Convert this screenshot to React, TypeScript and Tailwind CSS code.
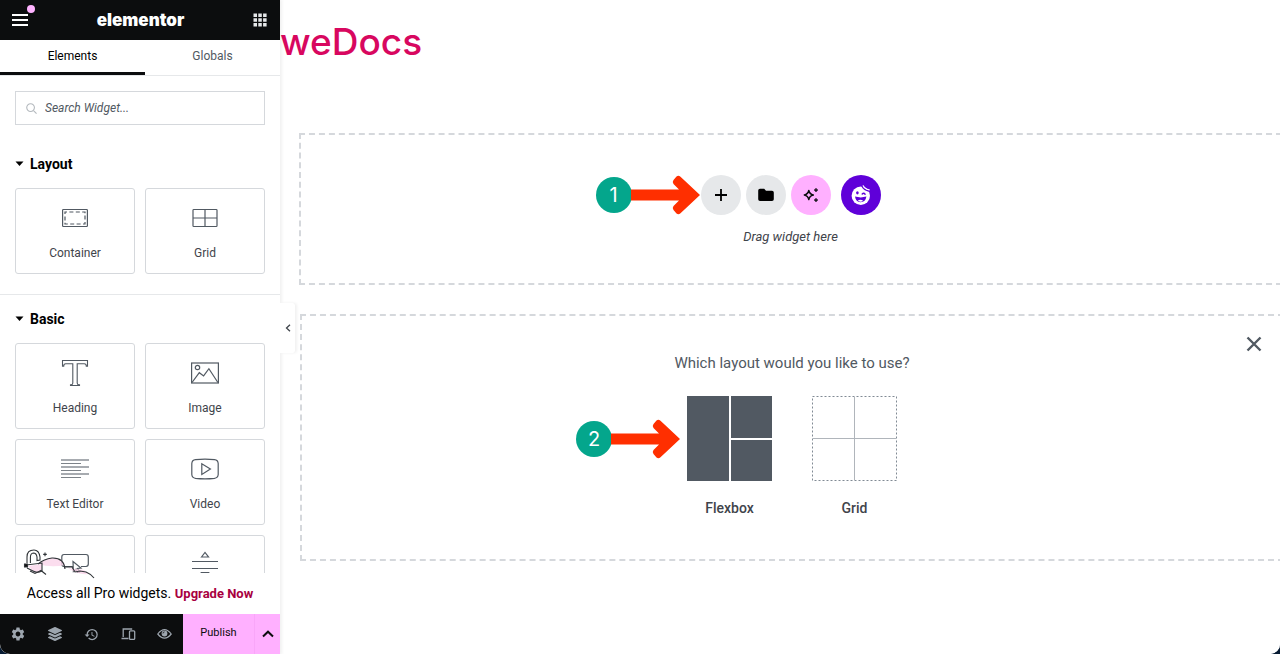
import React, { useState } from "react";
import { FaLayerGroup } from "react-icons/fa";
import { MdHistory, MdSettings } from "react-icons/md";

type IconProps = { className?: string };
type Widget = { name: string; icon: React.ReactNode; iconOnly?: boolean };

const line = { fill: "none", stroke: "currentColor", strokeWidth: 1.2 } as const;

function ContainerIcon() {
  return (
    <svg width="28" height="28" viewBox="0 0 28 28" {...line}>
      <rect x="1.6" y="5.5" width="24.8" height="17" rx="0.8" />
      <rect x="4" y="8" width="20" height="12" strokeDasharray="4 2.4" strokeDashoffset="2" />
    </svg>
  );
}

function GridIcon() {
  return (
    <svg width="28" height="28" viewBox="0 0 28 28" {...line}>
      <rect x="2" y="5.5" width="24" height="17" rx="0.8" />
      <path d="M14 5.5v17M2 14h24" />
    </svg>
  );
}

function HeadingIcon() {
  return (
    <svg width="28" height="28" viewBox="0 0 28 28" {...line} strokeWidth={1.1}>
      <path d="M1.5 1.5h25v5.6h-1.2c0-1.6-.6-2.4-2-2.4h-7.1v19.2c0 1.300.7 1.900 1.800 1.900h.5v.7H9.500v-.7h.5c1.100 0 1.800-.6 1.800-1.900V4.700H4.700c-1.400 0-2 .8-2 2.400H1.500z" />
    </svg>
  );
}

function ImageIcon() {
  return (
    <svg width="30" height="28" viewBox="0 0 30 28" {...line}>
      <rect x="1.600" y="4" width="26.800" height="20" />
      <circle cx="7.500" cy="8.500" r="2.200" />
      <path d="M2 23.500l7.300-9.800 4.300 3.200 5.300-7.200 9 13.800" />
    </svg>
  );
}

function TextIcon() {
  return (
    <svg width="28" height="28" viewBox="0 0 28 28" {...line}>
      <path d="M0 5h28M0 12h28M0 19h28" />
      <path d="M0 8.500h20M0 15.500h20M0 22.500h20" opacity="0.75" />
    </svg>
  );
}

function VideoIcon() {
  return (
    <svg width="28" height="28" viewBox="0 0 28 28" {...line}>
      <path d="M4.500 4.700Q14 3.700 23.500 4.700Q27 5.200 27.200 8.500V19.500Q27 22.800 23.500 23.300Q14 24.300 4.500 23.300Q1 22.800.8 19.500V8.500Q1 5.200 4.500 4.700z" />
      <path d="M10.800 8.800v10.600l8.600-5.300z" />
    </svg>
  );
}

function ButtonIcon() {
  return (
    <svg width="28" height="28" viewBox="0 0 28 28" {...line}>
      <path d="M12 15.500H3Q.8 15.500.8 13V6Q.8 3.500 3 3.500H25Q27.300 3.500 27.300 6V13Q27.300 15.300 25 15.500H20" />
      <path d="M12 10.500l8 6.500-3.500.4 2 3.800-1.700.8-1.800-3.800-2.600 2.300z" fill="#fff" />
    </svg>
  );
}

function DividerIcon() {
  return (
    <svg width="28" height="28" viewBox="0 0 28 28" {...line}>
      <path d="M10.500 6L14 1.500 17.500 6zM1 10.500h26M1 17.500h26M10.500 21.700h7L14 26z" />
    </svg>
  );
}

function UnlockArt({ className }: IconProps) {
  return (
    <svg className={className} width="74" height="30" viewBox="0 0 74 30" fill="none" stroke="#2f3337" strokeWidth="1.100">
      <g fill="#fbd5ea" stroke="none" opacity=".8">
        <path d="M16 15q6-5 14-6 10 0 13 7-14 3-27-1z" />
        <path d="M6 17l14-2v7q-5 3-9 0z" />
        <path d="M46 19l8 1 8 1 4 4q-10 1-20-6z" />
      </g>
      <path d="M16 15q6-5 14-6 12-.5 13 11" />
      <path d="M43 18h7l3 5 5-1 6 1q5 2 8 6" />
      <path d="M4 16l16-2v8q-5 2.500-9 0l-6-3" />
      <path d="M8 22l5 2.500 6-3 5 4" />
      <path d="M5 14V8q0-7 7-7 5 0 6 7v3l-3 .6V8q-.6-4-3.600-4-3 .2-3 4.600v5.400" />
      <path d="M2.500 15h3v3h-3z" fill="#111" />
      <path d="M23 3.600v3.600M21.200 5.400h3.600" />
    </svg>
  );
}

function DevicesIcon() {
  return (
    <svg width="15" height="14" viewBox="0 0 15 14" fill="none" stroke="currentColor" strokeWidth="1.300">
      <path d="M2.200 10V2h9M.5 11.500h7" />
      <rect x="8.500" y="3.800" width="5.200" height="8.600" rx="1" />
    </svg>
  );
}

function EyeIcon() {
  return (
    <svg width="15" height="12" viewBox="0 0 15 12" fill="none" stroke="currentColor" strokeWidth="1.200">
      <path d="M.8 6Q7.500-2.800 14.200 6 7.500 14.200.8 6z" />
      <circle cx="7.500" cy="5.500" r="2.900" fill="currentColor" stroke="none" />
      <path d="M6 5.400q0-1.500 1.500-1.500" stroke="#0c0d0e" strokeWidth=".8" />
    </svg>
  );
}

function FolderIcon() {
  return (
    <svg width="16" height="14" viewBox="0 0 16 14" fill="currentColor">
      <path d="M2 .8h4.200L8 2.800h6a1.800 1.800 0 0 1 1.800 1.800v6.600A1.800 1.800 0 0 1 14 13H2A1.800 1.800 0 0 1 .2 11.200V2.600A1.800 1.800 0 0 1 2 .8z" />
    </svg>
  );
}

function SparklesIcon() {
  return (
    <svg width="18" height="18" viewBox="0 0 18 18" fill="none" stroke="currentColor" strokeWidth="1.500" strokeLinejoin="round">
      <path d="M6.800 4.500Q7.600 8.200 11.300 9 7.600 9.800 6.800 13.500 6 9.800 2.300 9 6 8.200 6.800 4.500z" />
      <path d="M14 2.200q.4 1.500 1.900 1.800-1.500.4-1.900 1.900-.4-1.500-1.900-1.900 1.500-.3 1.900-1.800zM14 12.200q.4 1.500 1.900 1.800-1.500.4-1.900 1.900-.4-1.500-1.900-1.900 1.500-.3 1.900-1.800z" fill="currentColor" strokeWidth=".6" />
    </svg>
  );
}

function SmileyIcon() {
  return (
    <svg width="22" height="22" viewBox="0 0 22 22" fill="none">
      <circle cx="10.800" cy="11.800" r="9.200" fill="#fff" />
      <path d="M11.800 1.500q1.400 4.800 9 6" stroke="#5f00d9" strokeWidth="1.300" />
      <path d="M13.200 1.800q1.400 3.200 6 4" stroke="#fff" strokeWidth="1.200" strokeLinecap="round" />
      <ellipse cx="7.400" cy="8.800" rx="1.300" ry="1.600" fill="#5f00d9" />
      <path d="M12.200 10q1.500-1.500 2.900.2" stroke="#5f00d9" strokeWidth="1.400" strokeLinecap="round" />
      <path d="M5 12.600q5.800 1.600 11.400 0-.8 5.600-5.800 5.600-4.800 0-5.600-5.600z" fill="#5f00d9" />
      <path d="M7.800 16.600q2.600-1.600 5.400.2-1.200.9-2.800.9-1.600 0-2.600-1.100z" fill="#fff" />
    </svg>
  );
}

function Arrow() {
  return (
    <svg className="-ml-px" width="70" height="40" viewBox="0 0 70 40">
      <path d="M0 14.500H48L42.500 9Q41 7 42.500 5L45.500 1.500Q47.500 0 49.500 1.800L69 20 49.500 38.200Q47.500 40 45.500 38.500L42.500 35Q41 33 42.500 31L48 25.500H0z" fill="#ff2f00" />
    </svg>
  );
}

function Step({ n }: { n: number }) {
  return (
    <div className="absolute right-full top-1/2 flex -translate-y-1/2 items-center">
      <span className="flex size-9 items-center justify-center rounded-full bg-[#04a68c] font-[Inter,sans-serif] text-xl font-normal text-white">{n}</span>
      <Arrow />
    </div>
  );
}

const sections: { title: string; widgets: Widget[] }[] = [
  {
    title: "Layout",
    widgets: [
      { name: "Container", icon: <ContainerIcon /> },
      { name: "Grid", icon: <GridIcon /> },
    ],
  },
  {
    title: "Basic",
    widgets: [
      { name: "Heading", icon: <HeadingIcon /> },
      { name: "Image", icon: <ImageIcon /> },
      { name: "Text Editor", icon: <TextIcon /> },
      { name: "Video", icon: <VideoIcon /> },
      { name: "Button", icon: <ButtonIcon />, iconOnly: true },
      { name: "Divider", icon: <DividerIcon />, iconOnly: true },
    ],
  },
];

function Sidebar() {
  const [query, setQuery] = useState("");
  return (
    <aside className="relative z-10 flex w-70 shrink-0 flex-col bg-white shadow-[1px_0_3px_1px_rgba(0,0,0,0.06)]">
      <header className="flex h-10 shrink-0 items-center justify-between bg-[#0c0d0e] px-3 text-white">
        <button aria-label="Menu" className="relative">
          <svg width="16" height="14" viewBox="0 0 16 14" stroke="currentColor" strokeWidth="2">
            <path d="M0 2h16M0 7h16M0 12h16" />
          </svg>
          <span className="absolute -right-[7px] -top-2 size-2 rounded-full bg-[#ffb3ff]" />
        </button>
        <span className="font-[Inter,sans-serif] text-[17px] leading-none font-black">elementor</span>
        <button aria-label="Widgets panel" className="pr-px">
          <svg width="14" height="14" viewBox="0 0 14 14" fill="#e6e8ea">
            <path d="M.5.500h3.500v3.500H.5zM5.300.500h3.500v3.500H5.300zM10.100.500h3.500v3.500h-3.500zM.5 5.300h3.500v3.500H.5zM5.300 5.300h3.500v3.500H5.300zM10.100 5.300h3.500v3.500h-3.500zM.5 10.100h3.500v3.500H.5zM5.300 10.100h3.500v3.500H5.300zM10.100 10.100h3.500v3.500h-3.500z" />
          </svg>
        </button>
      </header>
      <nav className="flex h-9 shrink-0 border-b border-[#e6e8ea] text-xs">
        <button className="w-[145px] border-b-3 border-[#0c0d0e] text-black">Elements</button>
        <button className="flex-1 pb-[3px] text-[#515962]">Globals</button>
      </nav>
      <div className="min-h-0 flex-1 overflow-hidden">
        <div className="p-[15px]">
          <label className="flex h-[34px] items-center gap-2 border border-[#d5d8dc] px-2.5">
            <svg width="11" height="11" viewBox="0 0 12 12" fill="none" stroke="#b4b9be" strokeWidth="1.200">
              <circle cx="5" cy="5" r="4.200" />
              <path d="M8.200 8.200L11.500 11.500" />
            </svg>
            <input
              aria-label="Search Widget"
              className="min-w-0 flex-1 text-xs outline-none placeholder:text-[#515962] placeholder:italic"
              placeholder="Search Widget..."
              value={query}
              onChange={(e) => setQuery(e.target.value)}
            />
          </label>
        </div>
        {sections.map((s) => (
          <section key={s.title} className="border-b border-[#e6e8ea] px-[15px] pb-5">
            <h2 className="flex h-12 items-center">
              <button className="flex items-center gap-1.5 text-sm font-bold text-black">
                <svg width="9" height="6" viewBox="0 0 9 6" fill="currentColor">
                  <path d="M.5.500h8L4.500 5z" />
                </svg>
                {s.title}
              </button>
            </h2>
            <div className="grid grid-cols-2 gap-2.5">
              {s.widgets.map((w) => (
                <button
                  key={w.name}
                  aria-label={w.name}
                  className="flex h-[86px] flex-col items-center gap-[13px] rounded-[3px] border border-[#d5d8dc] pt-[15px] text-xs text-[#3f444b]"
                >
                  <span className="text-[#515962]">{w.icon}</span>
                  {!w.iconOnly && w.name}
                </button>
              ))}
            </div>
          </section>
        ))}
      </div>
      <div className="relative flex h-[41px] shrink-0 items-center justify-center bg-white text-black">
        <UnlockArt className="absolute -top-6 left-[22px]" />
        <p className="text-sm">
          Access all Pro widgets.{" "}
          <a href="#upgrade" className="text-[13px] font-bold text-[#a8003f]">Upgrade Now</a>
        </p>
      </div>
      <footer className="flex h-10 shrink-0 bg-[#0c0d0e] text-[#9da5ae]">
        <div className="flex flex-1 items-center">
          <button aria-label="Settings" className="flex flex-1 justify-center"><MdSettings size={16} /></button>
          <button aria-label="Structure" className="flex flex-1 justify-center"><FaLayerGroup size={14} /></button>
          <button aria-label="History" className="flex flex-1 justify-center"><MdHistory size={15} /></button>
          <button aria-label="Responsive" className="flex flex-1 justify-center"><DevicesIcon /></button>
          <button aria-label="Preview" className="flex flex-1 justify-center"><EyeIcon /></button>
        </div>
        <button className="w-[71px] bg-[#ffb0ff] pb-px text-[11px] text-[#0c0d0e]">Publish</button>
        <button aria-label="Save options" className="flex w-[26px] items-center justify-center border-l border-[#f9a6f9] bg-[#ffb0ff] text-[#0c0d0e]">
          <svg width="12" height="8" viewBox="0 0 12 8" fill="none" stroke="currentColor" strokeWidth="2">
            <path d="M1 6.500L6 1.700 11 6.500" />
          </svg>
        </button>
      </footer>
      <button aria-label="Hide panel" className="absolute left-full top-[303px] flex h-[50px] w-[15px] items-center justify-center rounded-r-[3px] bg-white text-[#3f444b] shadow-[2px_0_3px_rgba(0,0,0,0.06)]">
        <svg width="6" height="8" viewBox="0 0 6 8" fill="none" stroke="currentColor" strokeWidth="1.300">
          <path d="M5 .7L1.500 4 5 7.300" />
        </svg>
      </button>
    </aside>
  );
}

function Canvas() {
  return (
    <main className="flex min-w-0 flex-1 flex-col overflow-hidden bg-white">
      <h1 className="h-[133px] pt-[17px] font-[Inter,sans-serif] text-[37px] leading-[50px] font-medium text-[#d8075f]">weDocs</h1>
      <section className="-mr-0.5 ml-[19px] flex h-[152px] shrink-0 flex-col items-center gap-[13px] border-2 border-dashed border-[#d5d8dc] pt-10">
        <div className="relative flex gap-[5px]">
          <Step n={1} />
          <button aria-label="Add container" className="flex size-10 items-center justify-center rounded-full bg-[#e6e8ea] text-black">
            <svg width="12" height="12" viewBox="0 0 12 12" stroke="currentColor" strokeWidth="1.800">
              <path d="M6 0v12M0 6h12" />
            </svg>
          </button>
          <button aria-label="Add template" className="flex size-10 items-center justify-center rounded-full bg-[#e6e8ea] text-black"><FolderIcon /></button>
          <button aria-label="Build with AI" className="flex size-10 items-center justify-center rounded-full bg-[#ffb0ff] text-[#0c0d0e]"><SparklesIcon /></button>
          <button aria-label="Template library" className="ml-[5px] flex size-10 items-center justify-center rounded-full bg-[#5f00d9]"><SmileyIcon /></button>
        </div>
        <p className="text-[13px] leading-[18px] text-[#3f444b] italic">Drag widget here</p>
      </section>
      <section className="relative -mr-1 ml-5 mt-[29px] flex h-[247px] shrink-0 flex-col items-center border-2 border-dashed border-[#d5d8dc] pt-9">
        <button aria-label="Close" className="absolute right-5 top-5 text-[#515962]">
          <svg width="16" height="16" viewBox="0 0 16 16" fill="none" stroke="currentColor" strokeWidth="2.400">
            <path d="M1.500 1.500l13 13M14.500 1.500l-13 13" />
          </svg>
        </button>
        <h2 className="text-[15px] leading-[22px] text-[#515962]">Which layout would you like to use?</h2>
        <div className="mt-[22px] flex gap-10 text-sm font-medium text-[#3f444b]">
          <button className="flex flex-col items-center gap-[17px]">
            <span className="relative">
              <span className="absolute inset-y-0 -left-1.5">
                <Step n={2} />
              </span>
              <span className="grid size-[85px] grid-cols-2 grid-rows-2 gap-0.5">
                <span className="row-span-2 bg-[#515962]" />
                <span className="bg-[#515962]" />
                <span className="bg-[#515962]" />
              </span>
            </span>
            Flexbox
          </button>
          <button className="flex flex-col items-center gap-[17px]">
            <svg width="85" height="85" viewBox="0 0 85 85" fill="none" stroke="#b0b5bb">
              <rect x=".5" y=".5" width="84" height="84" strokeDasharray="2 2" stroke="#818a94" />
              <path d="M42.500 1v83M1 42.500h83" />
            </svg>
            Grid
          </button>
        </div>
      </section>
    </main>
  );
}

export default function App() {
  return (
    <div className="h-screen bg-[#071b33] font-[Roboto,sans-serif]">
      <div className="flex h-full overflow-hidden rounded-b-[10px] bg-white">
        <Sidebar />
        <Canvas />
      </div>
    </div>
  );
}
